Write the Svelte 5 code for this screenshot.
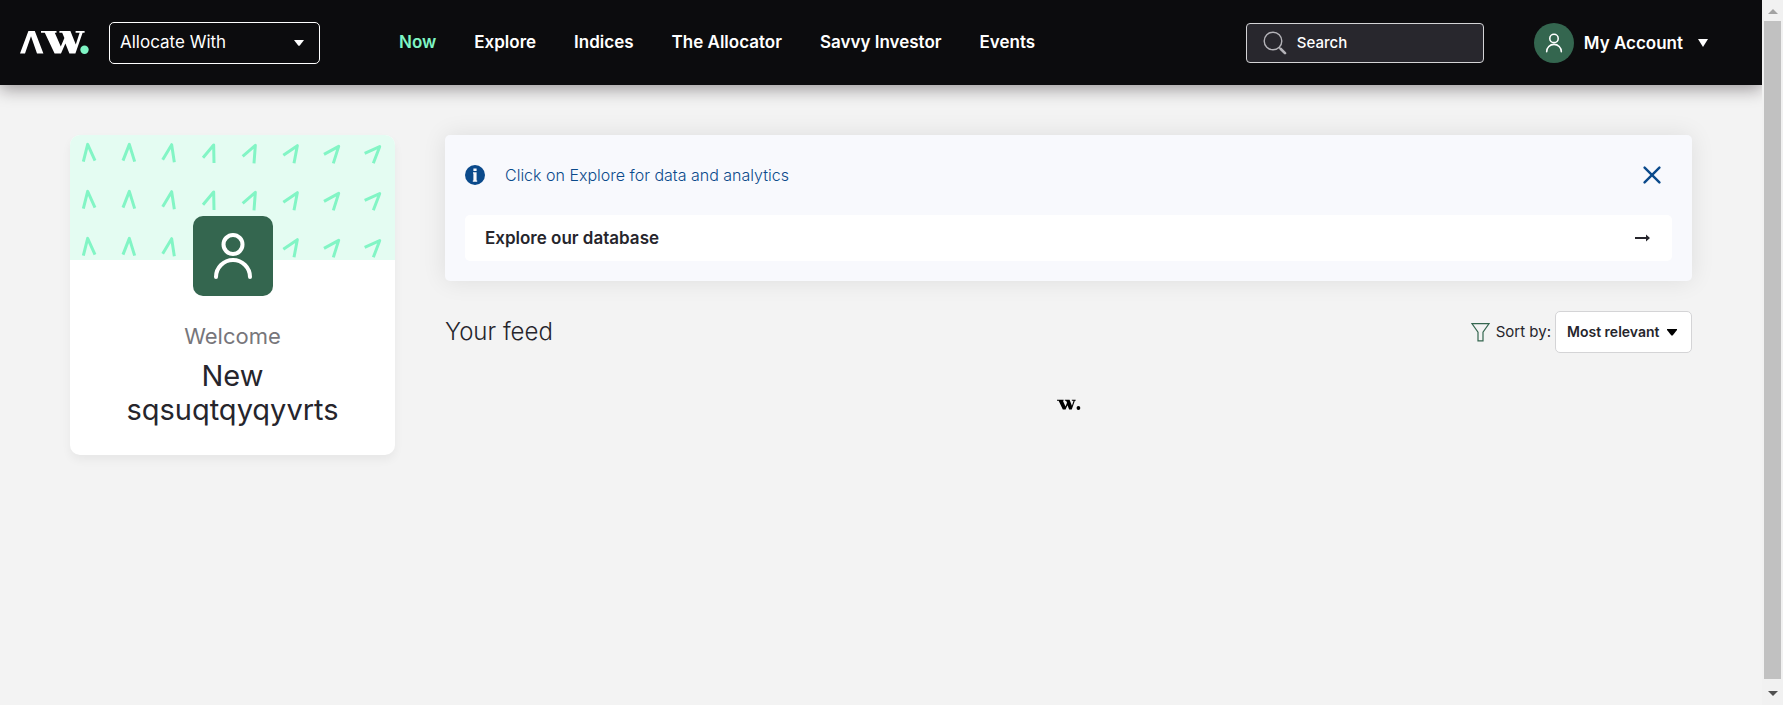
<script>
  const nav = ['Now', 'Explore', 'Indices', 'The Allocator', 'Savvy Investor', 'Events'];
  const chevrons = [
    '70,126 83,74 105,123',
    '189,123 208,74 224,126',
    '308,120 335,75 343,128',
    '429,114 461,76 462,130',
    '548,110 586,77 582,131',
    '670,107 712,78 702,131',
    '792,104 836,80 820,131',
    '914,101 959,81 940,131'
  ];
  const rows = [0, 141, 282];
</script>

{#snippet wmark()}
  <path d="M0 0H15.5V1.8H13.8L19.8 15.4L23.4 7L21.2 1.8H18.4V0H29.4L34.8 13.6L38.6 1.8H34.6V0H43.6V1.8H41.6L34.4 22.6H28.4L24.4 12.4L20 22.6H13.6L3.8 1.8H0Z" />
{/snippet}

{#snippet person()}
  <circle cx="12" cy="7" r="4.6" />
  <path d="M4 21.5a8 8 0 0 1 16 0" />
{/snippet}

<div class="shell">
  <div class="page">
    <header>
      <a class="logo" href="#home" aria-label="AW home">
        <svg width="70" height="23" viewBox="0 0 70 23">
          <g fill="#fff">
            <path d="M8.4 0H14.8L23.4 22.6H17L11 5.2L5 22.6H0Z" />
            <g transform="translate(21 0)">{@render wmark()}</g>
          </g>
          <circle cx="64.5" cy="18.8" r="4.2" fill="#7ff5c4" />
        </svg>
      </a>
      <div class="picker site">
        <select aria-label="Site"><option>Allocate With</option></select>
        <svg width="10" height="6" viewBox="0 0 10 6"><path d="M0 0H10L5.8 5.4Q5 6.2 4.2 5.4Z" fill="#fff" /></svg>
      </div>
      <nav>
        {#each nav as item, i}
          <a href="#{i}" class:active={i === 0}>{item}</a>
        {/each}
      </nav>
      <div class="search">
        <svg width="24" height="24" viewBox="0 0 24 24" fill="none" stroke="#b4b3b8" stroke-linecap="round">
          <circle cx="10" cy="10" r="8.8" stroke-width="1.4" />
          <path d="M16.2 16.4L18 18.2" stroke-width="1.4" />
          <path d="M17.8 18L22 22.2" stroke-width="2.6" />
        </svg>
        <input type="text" placeholder="Search" aria-label="Search" />
      </div>
      <button class="account">
        <span class="avatar">
          <svg width="22" height="22" viewBox="0 0 24 24" fill="none" stroke="#fff" stroke-width="1.7" stroke-linecap="round">{@render person()}</svg>
        </span>
        <span>My Account</span>
        <svg class="caret" width="10" height="8" viewBox="0 0 10 8"><path d="M0 0H10L5 8Z" fill="#fff" /></svg>
      </button>
    </header>

    <main>
      <aside class="profile">
        <svg class="banner" viewBox="0 0 975 375" fill="none" stroke="#82f5c5" stroke-width="9" stroke-linejoin="round">
          {#each rows as y}
            <g transform="translate(-30 {y - 46})">
              {#each chevrons as points}<polyline {points} />{/each}
            </g>
          {/each}
        </svg>
        <div class="portrait">
          <svg width="80" height="80" viewBox="0 0 80 80" fill="none" stroke="#fff" stroke-width="4" stroke-linecap="round">
            <circle cx="40" cy="28.5" r="9.5" />
            <path d="M23 61a17 17 0 0 1 34 0" />
          </svg>
        </div>
        <p class="welcome">Welcome</p>
        <h2>New sqsuqtqyqyvrts</h2>
      </aside>

      <section class="content">
        <div class="notice">
          <div class="message">
            <svg width="20" height="20" viewBox="0 0 20 20">
              <circle cx="10" cy="10" r="10" fill="#0b4a8b" />
              <path d="M8.4 3.4H11.6V6H8.4ZM8 7.2H11.6V15.4H12.2V16.8H7.8V15.4H8.4V8.6H8Z" fill="#f8f9fd" />
            </svg>
            <p>Click on Explore for data and analytics</p>
            <button class="close" aria-label="Close">
              <svg width="18" height="18" viewBox="0 0 18 18" stroke="#0b4a8b" stroke-width="2.4" stroke-linecap="round"><path d="M1.6 1.6L16.4 16.4M16.4 1.6L1.6 16.4" /></svg>
            </button>
          </div>
          <a class="explore" href="#explore">
            <span>Explore our database</span>
            <svg width="15" height="8" viewBox="0 0 15 8"><path d="M0 3.1H11V.6L15 4L11 7.4V4.9H0Z" fill="#26252c" /></svg>
          </a>
        </div>

        <div class="feed">
          <h1>Your feed</h1>
          <svg width="19" height="20" viewBox="0 0 19 20" fill="none" stroke="#34664f" stroke-width="1.2"><path d="M.9 1.6H18.1L12 10.2V18.8H7V10.2Z" /></svg>
          <label for="sort">Sort by:</label>
          <div class="picker sort">
            <select id="sort"><option>Most relevant</option></select>
            <svg width="10" height="7" viewBox="0 0 10 7"><path d="M0 0H10V1L5.6 6.6H4.4L0 1Z" /></svg>
          </div>
        </div>

        <div class="loading" role="status" aria-label="Loading">
          <svg width="24" height="12" viewBox="0 0 56 28"><g transform="translate(0 2)">{@render wmark()}<circle cx="50" cy="19" r="4.4" /></g></svg>
        </div>
      </section>
    </main>
  </div>

  <div class="scrollbar" aria-hidden="true">
    <svg width="10" height="5" viewBox="0 0 10 5"><path d="M0 5L5 0L10 5Z" fill="#a3a3a3" /></svg>
    <div class="thumb"></div>
    <svg width="10" height="5" viewBox="0 0 10 5"><path d="M0 0L5 5L10 0Z" fill="#505050" /></svg>
  </div>
</div>

<style>
  :global(body) {
    margin: 0;
    background: #f3f3f3;
  }
  .shell {
    display: flex;
    min-height: 100vh;
    font: 16px/20px Inter, 'Open Sans', sans-serif;
    color: #26252c;
  }
  .shell * {
    box-sizing: border-box;
  }
  svg {
    display: block;
    flex: none;
  }
  a {
    color: inherit;
    text-decoration: none;
  }
  p,
  h1,
  h2 {
    margin: 0;
    font-weight: 300;
  }
  button,
  select,
  input {
    margin: 0;
    font: inherit;
    color: inherit;
  }
  button {
    padding: 0;
    border: 0;
    background: none;
  }
  .page {
    flex: 1;
    min-width: 0;
    overflow: hidden;
  }
  header {
    display: flex;
    align-items: center;
    height: 85px;
    padding: 0 54px 0 20px;
    background: #0c0c0e;
    color: #fff;
    box-shadow: 0 4px 16px rgba(20, 10, 15, 0.4);
  }
  .picker {
    position: relative;
    height: 42px;
  }
  .picker select {
    appearance: none;
    width: 100%;
    height: 100%;
    border: 1px solid #fff;
    border-radius: 5px;
    background: transparent;
  }
  .picker option {
    color: #26252c;
  }
  .picker svg {
    position: absolute;
    top: 18px;
    pointer-events: none;
  }
  .site {
    width: 211px;
    margin: 0 79px 0 19px;
  }
  .site select {
    padding: 0 10px 2px;
    font-size: 17px;
  }
  .site svg {
    right: 16px;
  }
  nav {
    display: flex;
    gap: 38px;
    padding-bottom: 2px;
    font-size: 17px;
    font-weight: 600;
    white-space: nowrap;
  }
  .active {
    color: #7ff5c4;
  }
  .search {
    display: flex;
    align-items: center;
    gap: 10px;
    width: 238px;
    height: 40px;
    margin: 0 50px 0 auto;
    padding: 0 16px;
    border: 1px solid #d4d4d6;
    border-radius: 4px;
    background: #28272d;
  }
  .search input {
    width: 100%;
    min-width: 0;
    padding: 0;
    border: 0;
    outline: 0;
    background: none;
    font-size: 15px;
    font-weight: 500;
  }
  .search input::placeholder {
    color: #fff;
    opacity: 1;
  }
  .account {
    display: flex;
    align-items: center;
    gap: 10px;
    font-weight: 600;
    font-size: 17px;
    white-space: nowrap;
  }
  .avatar {
    display: grid;
    place-items: center;
    width: 40px;
    height: 40px;
    border-radius: 50%;
    background: #34664f;
  }
  .caret {
    margin-left: 5px;
  }
  main {
    display: flex;
    align-items: flex-start;
    gap: 50px;
    padding: 50px 70px;
  }
  .profile {
    display: flex;
    flex: 0 0 325px;
    flex-direction: column;
    align-items: center;
    padding-bottom: 28px;
    border-radius: 10px;
    background: #fff;
    box-shadow: 0 5px 10px rgba(0, 0, 0, 0.05);
    text-align: center;
  }
  .banner {
    width: 100%;
    border-radius: 10px 10px 0 0;
    background: #e4fcf2;
  }
  .portrait {
    margin-top: -44px;
    border-radius: 10px;
    background: #34664f;
  }
  .welcome {
    margin-top: 27px;
    color: #77767b;
    font-size: 22px;
    font-weight: 400;
    line-height: 26px;
  }
  h2 {
    padding: 0 40px;
    margin-top: 10px;
    font-size: 29px;
    font-weight: 400;
    line-height: 34px;
  }
  .content {
    flex: 1;
    min-width: 0;
  }
  .notice {
    padding: 0 20px 20px;
    border-radius: 5px;
    background: #f8f9fd;
    box-shadow: 0 0 25px rgba(0, 0, 0, 0.09);
  }
  .message {
    display: flex;
    align-items: center;
    gap: 20px;
    height: 80px;
    padding-right: 11px;
    color: #0b4a8b;
  }
  .close {
    margin-left: auto;
  }
  .explore {
    display: flex;
    align-items: center;
    justify-content: space-between;
    height: 46px;
    padding: 0 22px 0 20px;
    border-radius: 5px;
    background: #fff;
    font-size: 17px;
    font-weight: 600;
  }
  .feed {
    display: flex;
    align-items: center;
    margin-top: 30px;
    font-size: 15px;
  }
  h1 {
    margin-right: auto;
    font-size: 24px;
    line-height: 32px;
  }
  .feed label {
    margin: 0 4px 0 6px;
  }
  .sort {
    width: 137px;
  }
  .sort select {
    padding: 0 11px;
    border-color: #d4d4d6;
    background: #fff;
    font-size: 14px;
    font-weight: 600;
  }
  .sort svg {
    right: 15px;
  }
  .loading {
    display: flex;
    justify-content: center;
    margin-top: 46px;
  }
  .scrollbar {
    position: sticky;
    top: 0;
    display: flex;
    flex: 0 0 21px;
    flex-direction: column;
    align-items: center;
    justify-content: space-between;
    gap: 7px;
    height: 100vh;
    padding: 9px 0;
    background: #f1f1f1;
  }
  .thumb {
    flex: 1;
    width: 17px;
    margin-bottom: 5px;
    background: #c1c1c1;
  }
</style>
